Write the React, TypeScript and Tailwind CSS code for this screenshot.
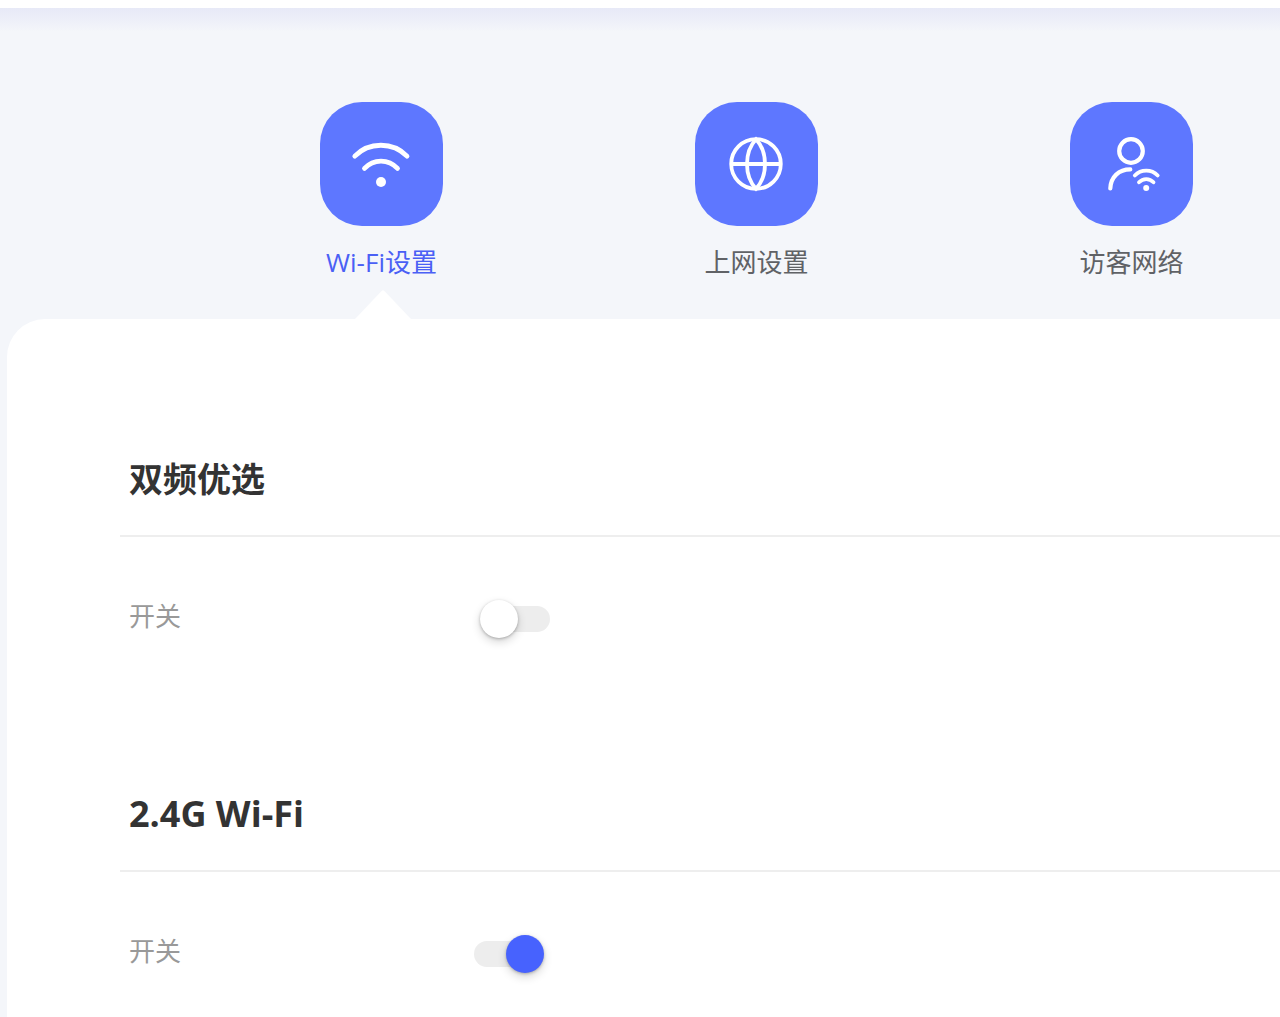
import { useState, type ReactNode } from 'react'

interface Tab {
  id: string
  label: string
  icon: ReactNode
}

interface Band {
  id: string
  title: string
  latin: boolean
  enabled: boolean
}

function WifiIcon() {
  return (
    <svg viewBox="0 0 64 64" className="h-16 w-16" fill="none" stroke="currentColor" strokeWidth="4.8" strokeLinecap="round">
      <path d="M4.8 24.2C18.8 9.6 43 9.6 57 24.2" />
      <path d="M14.5 36.4C23.5 26.6 38.5 26.6 47.5 36.4" />
      <circle cx="31" cy="50" r="5" fill="currentColor" stroke="none" />
    </svg>
  )
}

function GlobeIcon() {
  return (
    <svg viewBox="0 0 64 64" className="h-16 w-16" fill="none" stroke="currentColor" strokeWidth="3.8">
      <circle cx="31" cy="32" r="24.8" />
      <path d="M31 7.2C19 20 19 44 31 56.8C43 44 43 20 31 7.2Z" />
      <path d="M6 32h50" />
    </svg>
  )
}

function GuestIcon() {
  return (
    <svg viewBox="0 0 64 64" className="h-16 w-16" fill="none" stroke="currentColor" strokeWidth="4.2" strokeLinecap="round">
      <circle cx="31" cy="19" r="11.8" />
      <path d="M10.3 56.5C10.8 45 18.8 37.4 30.3 37.4" />
      <path d="M34.8 43.5C41 37 51.5 37 57.7 43.5" strokeWidth="3.8" />
      <path d="M39 50.3C43 46 49.5 46 53.5 50.3" strokeWidth="3.8" />
      <circle cx="46.2" cy="56" r="3" fill="currentColor" stroke="none" />
    </svg>
  )
}

const TABS: Tab[] = [
  { id: 'wifi', label: 'Wi-Fi设置', icon: <WifiIcon /> },
  { id: 'internet', label: '上网设置', icon: <GlobeIcon /> },
  { id: 'guest', label: '访客网络', icon: <GuestIcon /> },
]

const BANDS: Band[] = [
  { id: 'dual', title: '双频优选', latin: false, enabled: false },
  { id: 'band24', title: '2.4G Wi-Fi', latin: true, enabled: true },
]

function Switch({ id, defaultChecked }: { id: string; defaultChecked: boolean }) {
  return (
    <input
      id={id}
      type="checkbox"
      role="switch"
      defaultChecked={defaultChecked}
      className="relative h-[38px] w-[76px] cursor-pointer appearance-none
        before:absolute before:top-[6px] before:left-[8px] before:h-[26px] before:w-[68px] before:rounded-full before:bg-[#ededed]
        checked:before:left-0
        after:absolute after:top-0 after:left-[6px] after:h-[38px] after:w-[38px] after:rounded-full after:bg-white
        after:shadow-[0_4px_10px_rgba(0,0,0,0.16),0_1px_3px_rgba(0,0,0,0.25)]
        checked:after:left-[32px] checked:after:bg-[#4762fe]"
    />
  )
}

export default function App() {
  const [active, setActive] = useState('wifi')

  return (
    <div className="flex min-h-screen flex-col overflow-hidden bg-[#f4f6fa] font-['Open_Sans','Noto_Sans_CJK_SC',sans-serif]">
      {/* Header edge */}
      <header className="h-2 bg-white" />
      <div className="h-6 bg-linear-to-b from-[#e7e9f7] to-[#f4f6fa]" />

      {/* Tabs */}
      <nav className="flex justify-between pt-[70px] pr-[87px] pl-80">
        {TABS.map((tab) => (
          <button
            key={tab.id}
            type="button"
            onClick={() => setActive(tab.id)}
            className="relative flex h-[217px] w-[123px] cursor-pointer flex-col items-center"
          >
            <span className="flex h-[124px] w-full items-center justify-center rounded-[42px] bg-[#5e77ff] text-white">
              {tab.icon}
            </span>
            <span
              className={`mt-4 text-[26px] leading-10 whitespace-nowrap ${
                active === tab.id ? 'text-[#4a60f5]' : 'text-[#606266]'
              }`}
            >
              {tab.label}
            </span>
            {active === tab.id && (
              <svg viewBox="0 0 56 30" className="absolute bottom-0 left-[35px] h-[30px] w-14 fill-white">
                <path d="M0 30L26.5 2Q28 0.5 29.5 2L56 30Z" />
              </svg>
            )}
          </button>
        ))}
      </nav>

      {/* Settings panel */}
      <main className="ml-[7px] flex grow flex-col gap-[137px] rounded-tl-[38px] bg-white pt-[121px] pl-[113px]">
        {BANDS.map((band) => (
          <section key={band.id}>
            {/* Latin titles run one step larger to balance the Chinese ones */}
            <h2
              className={`border-b-2 border-[#eeeeee] px-[9px] pb-[17px] leading-[78px] font-bold text-[#333333] ${
                band.latin ? 'text-[36px]' : 'text-[34px]'
              }`}
            >
              {band.title}
            </h2>
            <div className="flex items-start px-[9px] pt-[63px]">
              <label htmlFor={band.id} className="w-[345px] text-[26px] leading-8 text-[#999999]">
                开关
              </label>
              <Switch id={band.id} defaultChecked={band.enabled} />
            </div>
          </section>
        ))}
      </main>
    </div>
  )
}
